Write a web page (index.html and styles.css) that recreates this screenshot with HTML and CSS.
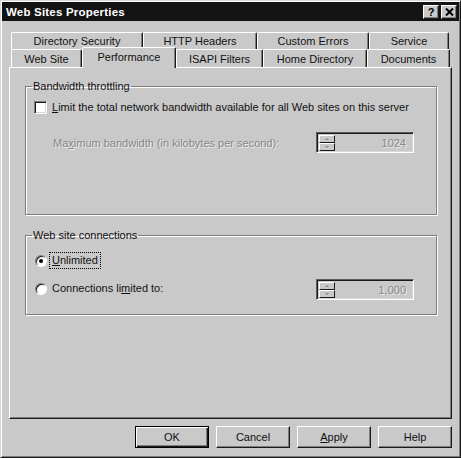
FILE: index.html
```html
<!DOCTYPE html>
<html>
<head>
<meta charset="utf-8">
<link rel="stylesheet" href="styles.css">
</head>
<body>
<div class="window">
  <div class="titlebar">
    <span class="title">Web Sites Properties</span>
    <div class="tbtns">
      <span class="tbtn help">?</span>
      <span class="tbtn close"><svg width="9" height="8" viewBox="0 0 9 8"><path d="M1 0.5 L8 7.5 M8 0.5 L1 7.5" stroke="#000" stroke-width="2" fill="none"/></svg></span>
    </div>
  </div>
  <div class="body">
    <div class="tabs">
      <div class="tabrow row1">
        <div class="tab w-dirsec">Directory Security</div>
        <div class="tab w-http">HTTP Headers</div>
        <div class="tab w-custom">Custom Errors</div>
        <div class="tab w-service">Service</div>
      </div>
      <div class="tabrow row2">
        <div class="tab w-website">Web Site</div>
        <div class="tab w-perf selected">Performance</div>
        <div class="tab w-isapi">ISAPI Filters</div>
        <div class="tab w-home">Home Directory</div>
        <div class="tab w-docs">Documents</div>
      </div>
    </div>
    <div class="panel">
      <fieldset class="group g1">
        <legend>Bandwidth throttling</legend>
        <div class="checkrow">
          <span class="check"></span>
          <span class="label"><u>L</u>imit the total network bandwidth available for all Web sites on this server</span>
        </div>
        <div class="spinrow">
          <span class="disabled">Ma<u>x</u>imum bandwidth (in kilobytes per second):</span>
          <div class="spin">
            <div class="spinbtns"><span class="sb"><i class="ar up"></i></span><span class="sb"><i class="ar down"></i></span></div>
            <span class="val">1024</span>
          </div>
        </div>
      </fieldset>
      <fieldset class="group g2">
        <legend>Web site connections</legend>
        <div class="radiorow">
          <span class="radio on"></span>
          <span class="label focus"><u>U</u>nlimited</span>
        </div>
        <div class="radiorow2">
          <div class="radioleft">
            <span class="radio"></span>
            <span class="label">Connections li<u>m</u>ited to:</span>
          </div>
          <div class="spin">
            <div class="spinbtns"><span class="sb"><i class="ar up"></i></span><span class="sb"><i class="ar down"></i></span></div>
            <span class="val">1,000</span>
          </div>
        </div>
      </fieldset>
    </div>
    <div class="buttons">
      <span class="btn default">OK</span>
      <span class="btn">Cancel</span>
      <span class="btn"><u>A</u>pply</span>
      <span class="btn">Help</span>
    </div>
  </div>
</div>
</body>
</html>
```

FILE: styles.css
```css
* { box-sizing: border-box; }
html, body { margin: 0; padding: 0; }
body {
  width: 461px;
  height: 458px;
  background: #c9c9c9;
  font-family: "Liberation Sans", Arial, sans-serif;
  font-size: 11px;
  color: #111;
  overflow: hidden;
}
.window {
  width: 461px;
  height: 458px;
  background: #c9c9c9;
  border: 1px solid;
  border-color: #d8d8d8 #1a1a1a #1a1a1a #d8d8d8;
  box-shadow: inset 1px 1px #fff, inset -1px -1px #7d7d7d;
  padding: 1px;
  display: flex;
  flex-direction: column;
}
.titlebar {
  height: 19px;
  background: #131313;
  display: flex;
  align-items: center;
  justify-content: space-between;
  padding: 0 2px 0 4px;
}
.title {
  color: #fff;
  font-weight: bold;
  font-size: 11.5px;
  letter-spacing: 0.2px;
}
.tbtns { display: flex; gap: 2px; }
.tbtn {
  width: 16px;
  height: 14px;
  background: #c9c9c9;
  border: 1px solid;
  border-color: #fff #1a1a1a #1a1a1a #fff;
  box-shadow: inset -1px -1px #7d7d7d;
  display: flex;
  align-items: center;
  justify-content: center;
  font-weight: bold;
  font-size: 11px;
  line-height: 12px;
  color: #000;
}
.body {
  padding: 0 7px;
  display: flex;
  flex-direction: column;
}
.tabs { margin-top: 11px; }
.tabrow { display: flex; }
.row1 { height: 17px; padding-left: 2px; }
.row2 { height: 18px; padding-left: 2px; align-items: flex-end; }
.tab {
  height: 100%;
  border-top: 1px solid #fff;
  border-left: 1px solid #fff;
  border-right: 1px solid #1a1a1a;
  box-shadow: inset -1px 0 #7d7d7d;
  border-radius: 2px 2px 0 0;
  text-align: center;
  line-height: 13px;
  background: #c9c9c9;
  white-space: nowrap;
}
.row1 .tab { padding-top: 2px; }
.row2 .tab { height: 18px; padding-top: 3px; }
.row2 .tab.selected {
  height: 21px;
  margin-bottom: -1px;
  position: relative;
  z-index: 1;
  padding-top: 3px;
}
.w-dirsec { width: 132px; }
.w-http { width: 114px; }
.w-custom { width: 112px; }
.w-service { width: 80px; }
.w-website { width: 71px; }
.w-perf { width: 94px; }
.w-isapi { width: 87px; }
.w-home { width: 104px; }
.w-docs { width: 83px; }

.panel {
  height: 352px;
  border: 1px solid;
  border-color: #fff #1a1a1a #1a1a1a #fff;
  box-shadow: inset -1px -1px #7d7d7d;
  padding: 12px 14px 0 15px;
  display: flex;
  flex-direction: column;
}
.group {
  margin: 0;
  padding: 0;
  border: 1px solid #7d7d7d;
  box-shadow: inset 1px 1px #fff, 1px 1px #fff;
  min-inline-size: 0;
}
.group legend {
  margin-left: 6px;
  padding: 0 1px;
  line-height: 13px;
}
.g1 { height: 135px; }
.g2 { height: 86px; margin-top: 14px; }

.checkrow {
  display: flex;
  align-items: center;
  margin: 8px 0 0 8px;
  height: 13px;
}
.check {
  width: 13px;
  height: 13px;
  background: #fff;
  border: 1px solid;
  border-color: #7d7d7d #fff #fff #7d7d7d;
  box-shadow: inset 1px 1px #1a1a1a, inset -1px -1px #d8d8d8;
  flex: none;
}
.label {
  margin-left: 3px;
  padding: 0 2px;
  line-height: 13px;
  white-space: nowrap;
}
.spinrow {
  display: flex;
  align-items: center;
  justify-content: space-between;
  margin-top: 18px;
  padding: 0 22px 0 27px;
}
.disabled {
  color: #878787;
  text-shadow: 1px 1px #ececec;
  white-space: nowrap;
}
.spin {
  width: 98px;
  height: 21px;
  display: flex;
  align-items: center;
  border: 1px solid;
  border-color: #5a5a5a #fff #fff #5a5a5a;
  box-shadow: inset 1px 1px #1a1a1a, inset -1px -1px #d8d8d8;
  padding: 2px 7px 1px 2px;
}
.spinbtns {
  display: flex;
  flex-direction: column;
  width: 16px;
  height: 16px;
  flex: none;
}
.sb {
  height: 8px;
  background: #c9c9c9;
  border: 1px solid;
  border-color: #fff #1a1a1a #1a1a1a #fff;
  display: flex;
  align-items: center;
  justify-content: center;
}
.ar {
  width: 0;
  height: 0;
  border-left: 2px solid transparent;
  border-right: 2px solid transparent;
}
.ar.up { border-bottom: 2px solid #8a8a8a; }
.ar.down { border-top: 2px solid #8a8a8a; }
.val {
  flex: 1;
  text-align: right;
  color: #878787;
  text-shadow: 1px 1px #ececec;
}

.radiorow {
  display: flex;
  align-items: center;
  margin: 11px 0 0 9px;
  height: 15px;
}
.radiorow2 {
  display: flex;
  align-items: flex-start;
  justify-content: space-between;
  margin: 11px 0 0 9px;
  padding-right: 22px;
}
.radioleft {
  display: flex;
  align-items: center;
  padding-top: 3px;
}
.radio {
  width: 12px;
  height: 12px;
  border-radius: 50%;
  background: #fff;
  border: 1px solid;
  border-color: #7d7d7d #fff #fff #7d7d7d;
  box-shadow: inset 1px 1px #1a1a1a;
  flex: none;
  display: flex;
  align-items: center;
  justify-content: center;
}
.radio.on::after {
  content: "";
  width: 4px;
  height: 4px;
  border-radius: 50%;
  background: #000;
}
.focus {
  outline: 1px dotted #000;
  line-height: 13px;
  padding: 1px 2px;
}

.buttons {
  display: flex;
  justify-content: flex-end;
  gap: 7px;
  margin-top: 7px;
}
.btn {
  width: 74px;
  height: 22px;
  border: 1px solid;
  border-color: #fff #1a1a1a #1a1a1a #fff;
  box-shadow: inset -1px -1px #7d7d7d;
  display: flex;
  align-items: center;
  justify-content: center;
  padding-bottom: 1px;
}
.btn.default {
  border: 1px solid #000;
  box-shadow: inset 1px 1px #fff, inset -1px -1px #1a1a1a, inset -2px -2px #7d7d7d;
}
```
